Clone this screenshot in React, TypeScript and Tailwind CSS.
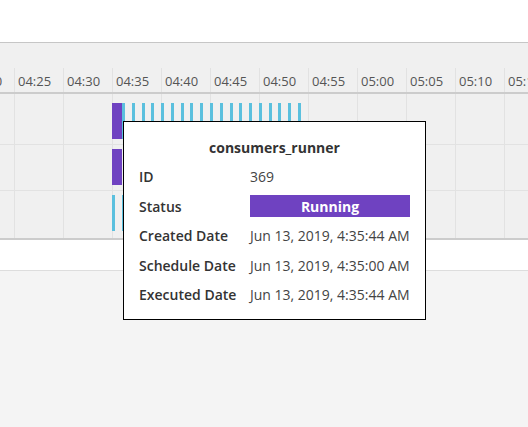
const ticks = ["04:20", "04:25", "04:30", "04:35", "04:40", "04:45", "04:50", "04:55", "05:00", "05:05", "05:10", "05:15"]

const rows = [
  { purple: true, stripes: 19, h: "h-[47px] border-b", top: "top-[5px]" },
  { purple: true, stripes: 0, h: "h-[46px] border-b", top: "top-[4px]" },
  { purple: false, stripes: 2, h: "h-[47px]", top: "top-[4px]" },
]

function GridLines() {
  return (
    <div className="absolute inset-0 flex -ml-[35px]">
      {ticks.map((t) => (
        <div key={t} className="w-[49px] shrink-0 border-l border-[#e2e2e2]" />
      ))}
    </div>
  )
}

function Tooltip() {
  const items: [string, string][] = [
    ["ID", "369"],
    ["Status", ""],
    ["Created Date", "Jun 13, 2019, 4:35:44 AM"],
    ["Schedule Date", "Jun 13, 2019, 4:35:00 AM"],
    ["Executed Date", "Jun 13, 2019, 4:35:44 AM"],
  ]
  return (
    <div className="absolute left-[123px] top-[121px] w-[303px] h-[199px] bg-white border border-black px-[15px] pt-[10px] z-10">
      <div className="h-[30px] flex items-center justify-center text-[14px] font-bold text-[#333]">consumers_runner</div>
      {items.map(([label, value]) => (
        <div key={label} className="h-[29.5px] grid grid-cols-[111px_1fr] items-center">
          <span className="text-[14px] font-semibold text-[#333]">{label}</span>
          {label === "Status" ? (
            <span className="h-[22px] bg-[#6f42c1] text-white text-[14px] font-bold flex items-center justify-center">
              Running
            </span>
          ) : (
            <span className="text-[14px] text-[#444]">{value}</span>
          )}
        </div>
      ))}
    </div>
  )
}

export default function App() {
  return (
    <div className="relative w-[528px] h-[427px] overflow-hidden bg-[#f4f4f4]" style={{ fontFamily: '"Open Sans", sans-serif' }}>
      {/* top bar */}
      <div className="h-[43px] bg-white border-b border-[#c6c6c6]" />

      {/* timeline */}
      <div className="bg-[#f0f0f0] border-b-2 border-[#cccccc]">
        <div className="h-[25px]" />
        <div className="relative h-[26px] overflow-hidden border-b-2 border-[#cccccc]">
          <div className="flex -ml-[35px] h-full">
            {ticks.map((t) => (
              <div key={t} className="w-[49px] shrink-0 border-l border-[#e2e2e2] pl-[3px] pt-[2px] text-[13px] leading-[23px] text-[#555]">
                {t}
              </div>
            ))}
          </div>
        </div>
        <div className="relative overflow-hidden pt-[4px]">
          <GridLines />
          {rows.map((r, i) => (
            <div key={i} className={`relative border-[#e2e2e2] ${r.h}`}>
              {r.purple ? (
                <div className={`absolute left-[112px] w-[10px] h-[36px] bg-[#6f42c1] ${r.top}`} />
              ) : (
                <div className={`absolute left-[112px] w-[3px] h-[36px] bg-[#5bc0de] ${r.top}`} />
              )}
              {Array.from({ length: r.stripes }).map((_, k) => (
                <div
                  key={k}
                  className={`absolute w-[3px] h-[36px] bg-[#5bc0de] ${r.top}`}
                  style={{ left: 122 + k * 9.78 }}
                />
              ))}
            </div>
          ))}
        </div>
      </div>

      {/* white band */}
      <div className="h-[31px] bg-white border-b border-[#dddddd]" />

      <Tooltip />
    </div>
  )
}
